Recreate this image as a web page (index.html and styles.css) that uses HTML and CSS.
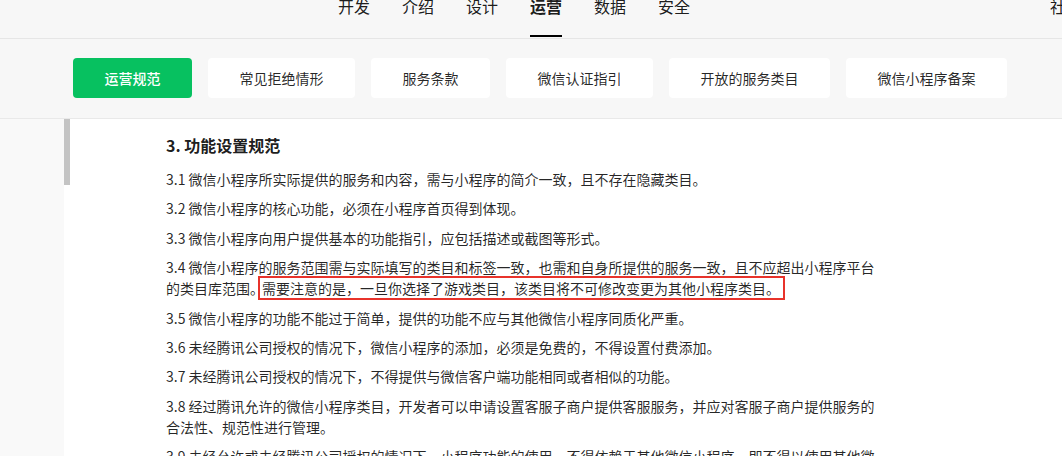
FILE: index.html
```html
<!DOCTYPE html>
<html lang="zh-CN">
<head>
<meta charset="UTF-8">
<meta name="viewport" content="width=device-width, initial-scale=1.0">
<title>运营规范</title>
<link rel="stylesheet" href="styles.css">
</head>
<body>
<header class="topnav">
  <nav class="nav-list">
    <a class="nav-item">开发</a>
    <a class="nav-item">介绍</a>
    <a class="nav-item">设计</a>
    <a class="nav-item active">运营</a>
    <a class="nav-item">数据</a>
    <a class="nav-item">安全</a>
  </nav>
  <a class="nav-item nav-right">社区</a>
</header>

<div class="tabbar">
  <a class="tab active">运营规范</a>
  <a class="tab">常见拒绝情形</a>
  <a class="tab">服务条款</a>
  <a class="tab">微信认证指引</a>
  <a class="tab">开放的服务类目</a>
  <a class="tab">微信小程序备案</a>
</div>

<div class="main">
  <aside class="sidebar"></aside>
  <div class="content">
    <div class="scroll-thumb"></div>
    <article class="doc">
      <h3>3. 功能设置规范</h3>
      <p>3.1 微信小程序所实际提供的服务和内容，需与小程序的简介一致，且不存在隐藏类目。</p>
      <p>3.2 微信小程序的核心功能，必须在小程序首页得到体现。</p>
      <p>3.3 微信小程序向用户提供基本的功能指引，应包括描述或截图等形式。</p>
      <p>3.4 微信小程序的服务范围需与实际填写的类目和标签一致，也需和自身所提供的服务一致，且不应超出小程序平台的类目库范围。<span class="mark">需要注意的是，一旦你选择了游戏类目，该类目将不可修改变更为其他小程序类目。</span></p>
      <p>3.5 微信小程序的功能不能过于简单，提供的功能不应与其他微信小程序同质化严重。</p>
      <p>3.6 未经腾讯公司授权的情况下，微信小程序的添加，必须是免费的，不得设置付费添加。</p>
      <p>3.7 未经腾讯公司授权的情况下，不得提供与微信客户端功能相同或者相似的功能。</p>
      <p>3.8 经过腾讯允许的微信小程序类目，开发者可以申请设置客服子商户提供客服服务，并应对客服子商户提供服务的合法性、规范性进行管理。</p>
      <p>3.9 未经允许或未经腾讯公司授权的情况下，小程序功能的使用，不得依赖于其他微信小程序，即不得以使用其他微信小程序作为前提条件。</p>
    </article>
  </div>
</div>
</body>
</html>
```

FILE: styles.css
```css
html, body {
  margin: 0;
  height: 100%;
  overflow: hidden;
}

body {
  font-family: "Noto Sans CJK SC", "Noto Sans", sans-serif;
  color: rgba(0, 0, 0, 0.9);
  background-color: #fff;
  display: flex;
  flex-direction: column;
}

a {
  text-decoration: none;
  color: inherit;
}

/* top navigation */
.topnav {
  height: 38px;
  background-color: #f7f7f7;
  border-bottom: 1px solid #e6e6e6;
  display: flex;
  justify-content: space-between;
  overflow: hidden;
  flex-shrink: 0;
}

.nav-list {
  display: flex;
  gap: 32px;
  margin-left: 338px;
  margin-top: -2px;
}

.nav-item {
  font-size: 16px;
  line-height: 16px;
  height: 39px;
  box-sizing: border-box;
  white-space: nowrap;
}

.nav-item.active {
  font-weight: 700;
  border-bottom: 2px solid #000;
}

.nav-right {
  margin-top: -2px;
  margin-right: -20px;
  width: 32px;
}

/* tab buttons */
.tabbar {
  display: flex;
  gap: 16px;
  padding: 19px 0 20px 73px;
  background-color: #f7f7f7;
  border-bottom: 1px solid #e9e9e9;
  flex-shrink: 0;
}

.tab {
  height: 40px;
  padding: 0 31.5px;
  display: flex;
  align-items: center;
  font-size: 14px;
  background-color: #fff;
  border-radius: 4px;
  white-space: nowrap;
  color: rgba(0, 0, 0, 0.85);
}

.tab.active {
  background-color: #07c160;
  color: #fff;
  font-weight: 500;
}

/* document area */
.main {
  flex: 1;
  display: flex;
}

.sidebar {
  width: 64px;
  background-color: #f9f9f9;
  flex-shrink: 0;
}

.content {
  flex: 1;
  display: flex;
}

.scroll-thumb {
  width: 6px;
  height: 66px;
  background-color: #c4c4c4;
  flex-shrink: 0;
}

.doc {
  width: 712px;
  margin-left: 96px;
  padding-top: 14px;
}

.doc h3 {
  font-size: 16px;
  font-weight: 700;
  line-height: 24px;
  margin: 0 0 12px;
}

.doc p {
  font-size: 14px;
  line-height: 21px;
  margin: 0 0 8.4px;
  color: rgba(0, 0, 0, 0.85);
}

/* the closing 。 before the box is set half-width in the original */
.mark {
  margin-left: -6px;
  padding: 0 3px 0 2px;
  border: 2px solid #e8332b;
}
```
